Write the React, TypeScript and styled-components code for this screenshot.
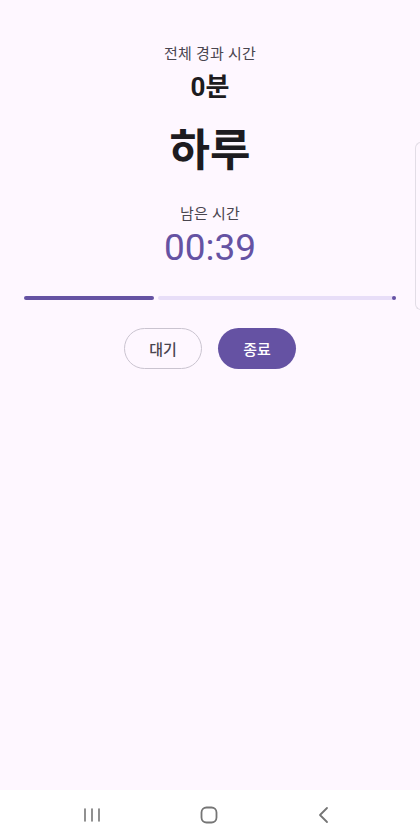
import styled, { createGlobalStyle } from "styled-components";

const GlobalStyle = createGlobalStyle`
  html, body {
    margin: 0;
    padding: 0;
    background: #fef7ff;
  }
  body {
    font-family: Roboto, "Noto Sans CJK KR", "Noto Sans", sans-serif;
  }
`;

const Screen = styled.div`
  position: relative;
  width: 420px;
  height: 840px;
  display: flex;
  flex-direction: column;
  background: #fef7ff;
  overflow: hidden;
`;

const Content = styled.main`
  flex: 1;
  display: flex;
  flex-direction: column;
  align-items: center;
  padding: 44px 24px 0;
`;

const Label = styled.div`
  font-size: 15px;
  line-height: 20px;
  color: #49454f;
  letter-spacing: 0.2px;
`;

const Elapsed = styled.div`
  margin-top: 8px;
  font-size: 26px;
  line-height: 30px;
  font-weight: 700;
  color: #1d1b20;
`;

const Title = styled.h1`
  margin: 21px 0 0;
  font-size: 44px;
  line-height: 56px;
  font-weight: 700;
  color: #1d1b20;
`;

const RemainLabel = styled(Label)`
  margin-top: 25px;
`;

const Remaining = styled.div`
  margin-top: 2px;
  font-size: 37px;
  line-height: 44px;
  color: #6552a3;
`;

const Progress = styled.div`
  margin-top: 26px;
  width: 100%;
  height: 4px;
  display: flex;
  align-items: center;
  gap: 4px;
`;

const Track = styled.div<{ $active?: boolean }>`
  height: 4px;
  border-radius: 2px;
  background: ${(p) => (p.$active ? "#6552a3" : "#e8def8")};
`;

const Rest = styled(Track)`
  flex: 1;
  position: relative;
  &::after {
    content: "";
    position: absolute;
    right: 0;
    top: 0;
    width: 4px;
    height: 4px;
    border-radius: 50%;
    background: #6552a3;
  }
`;

const Buttons = styled.div`
  margin-top: 28px;
  display: flex;
  gap: 16px;
`;

const Button = styled.button<{ $filled?: boolean }>`
  width: 78px;
  height: 41px;
  border-radius: 21px;
  font-family: inherit;
  font-size: 15px;
  font-weight: 500;
  cursor: pointer;
  box-sizing: border-box;
  border: ${(p) => (p.$filled ? "none" : "1.3px solid #cac4d0")};
  background: ${(p) => (p.$filled ? "#6552a3" : "transparent")};
  color: ${(p) => (p.$filled ? "#ffffff" : "#49454f")};
`;

const EdgeHandle = styled.div`
  position: absolute;
  right: -6px;
  top: 142px;
  width: 10px;
  height: 166px;
  border: 1.5px solid #e2dde6;
  border-right: none;
  border-radius: 6px 0 0 6px;
`;

const NavBar = styled.nav`
  height: 50px;
  background: #ffffff;
  display: flex;
  align-items: center;
  justify-content: center;
  gap: 99px;
  padding-right: 6px;
`;

export default function App() {
  const progress = 0.35;
  return (
    <Screen>
      <GlobalStyle />
      <Content>
        <Label>전체 경과 시간</Label>
        <Elapsed>0분</Elapsed>
        <Title>하루</Title>
        <RemainLabel>남은 시간</RemainLabel>
        <Remaining>00:39</Remaining>
        <Progress>
          <Track $active style={{ width: `${progress * 100}%` }} />
          <Rest />
        </Progress>
        <Buttons>
          <Button>대기</Button>
          <Button $filled>종료</Button>
        </Buttons>
      </Content>
      <EdgeHandle />
      <NavBar>
        <svg width="18" height="16" viewBox="0 0 18 16">
          <g stroke="#757575" strokeWidth="1.6" strokeLinecap="round">
            <line x1="2" y1="2" x2="2" y2="14" />
            <line x1="9" y1="2" x2="9" y2="14" />
            <line x1="16" y1="2" x2="16" y2="14" />
          </g>
        </svg>
        <svg width="18" height="18" viewBox="0 0 18 18">
          <rect x="1.5" y="1.5" width="15" height="15" rx="5" fill="none" stroke="#757575" strokeWidth="1.8" />
        </svg>
        <svg width="14" height="18" viewBox="0 0 14 18">
          <polyline points="10,2 3,9 10,16" fill="none" stroke="#757575" strokeWidth="1.8" strokeLinecap="round" strokeLinejoin="round" />
        </svg>
      </NavBar>
    </Screen>
  );
}
